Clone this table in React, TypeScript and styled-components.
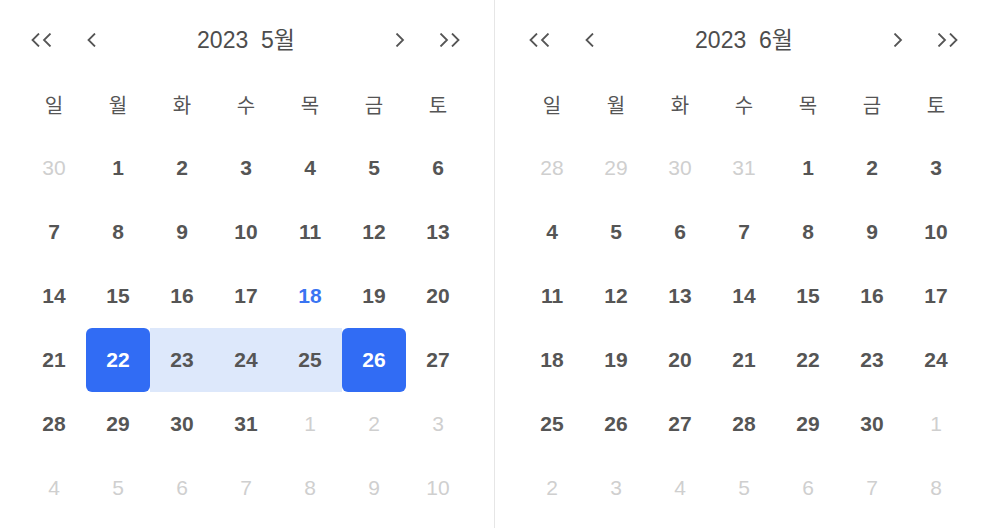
import * as React from 'react'
import styled, { createGlobalStyle } from 'styled-components'

const GlobalStyle = createGlobalStyle`
  html, body {
    margin: 0;
    padding: 0;
    background: #fff;
  }
  body {
    font-family: "Liberation Sans", "Noto Sans CJK KR", sans-serif;
    color: #555;
  }
`

const Wrapper = styled.div`
  display: flex;
  width: 984px;
  height: 528px;
  overflow: hidden;
`

const Panel = styled.section<{ $left: number; $right: number }>`
  padding: 8px ${(p) => p.$right}px 0 ${(p) => p.$left}px;
  width: 448px;
  flex: none;
`

const Divider = styled.div`
  width: 1px;
  background: #e6e6e6;
  flex: none;
`

const Header = styled.div`
  display: flex;
  align-items: center;
  height: 64px;
  gap: 10px;
`

const NavButton = styled.button`
  width: 40px;
  height: 40px;
  padding: 0;
  border: 0;
  background: none;
  display: flex;
  align-items: center;
  justify-content: center;
  color: #555;
  cursor: pointer;
`

const Title = styled.div`
  flex: 1;
  text-align: center;
  font-family: "Liberation Sans", "Noto Sans CJK KR", sans-serif;
  font-size: 23px;
  white-space: pre;
  color: #4d4d4d;
  margin-top: -4px;
`

const Grid = styled.div`
  display: grid;
  grid-template-columns: repeat(7, 64px);
  grid-auto-rows: 64px;
`

const WeekDay = styled.div`
  display: flex;
  align-items: center;
  justify-content: center;
  font-family: "Noto Sans CJK KR", sans-serif;
  font-size: 20px;
  color: #555;
`

type Kind = 'normal' | 'muted' | 'today' | 'edge' | 'range'

const Day = styled.div<{ $kind: Kind }>`
  display: flex;
  align-items: center;
  justify-content: center;
  font-size: 21px;
  font-weight: ${(p) => (p.$kind === 'muted' ? 400 : 700)};
  color: ${(p) =>
    p.$kind === 'muted' ? '#cfcfcf' : p.$kind === 'today' ? '#3a74f2' : p.$kind === 'edge' ? '#fff' : '#555'};
  background: ${(p) => (p.$kind === 'edge' ? '#316cf4' : p.$kind === 'range' ? '#dde8fb' : 'transparent')};
  border-radius: ${(p) => (p.$kind === 'edge' ? '6px' : '0')};
`

const Chevron = ({ dir, double }: { dir: 'l' | 'r'; double?: boolean }) => {
  const one = (x: number) =>
    dir === 'l' ? `M${x + 6.5} 0.5 L${x} 7 L${x + 6.5} 13.5` : `M${x} 0.5 L${x + 6.5} 7 L${x} 13.5`
  return (
    <svg width={double ? 22 : 10} height="14" viewBox={double ? '0 0 22 14' : '0 0 10 14'} fill="none">
      {double ? (
        <>
          <path d={one(1.5)} stroke="#555" strokeWidth="1.8" />
          <path d={one(13)} stroke="#555" strokeWidth="1.8" />
        </>
      ) : (
        <path d={one(1.5)} stroke="#555" strokeWidth="1.8" />
      )}
    </svg>
  )
}

const weekDays = ['일', '월', '화', '수', '목', '금', '토']

type Cell = { n: number; kind: Kind }

const buildMonth = (prevDays: number[], count: number, nextCount: number, marks: Record<number, Kind>): Cell[] => {
  const cells: Cell[] = prevDays.map((n) => ({ n, kind: 'muted' as Kind }))
  for (let i = 1; i <= count; i++) cells.push({ n: i, kind: marks[i] || 'normal' })
  for (let i = 1; i <= nextCount; i++) cells.push({ n: i, kind: 'muted' })
  return cells
}

const may = buildMonth([30], 31, 10, { 18: 'today', 22: 'edge', 23: 'range', 24: 'range', 25: 'range', 26: 'edge' })
const june = buildMonth([28, 29, 30, 31], 30, 8, {})

const Calendar = ({ title, cells, left, right }: { title: string; cells: Cell[]; left: number; right: number }) => (
  <Panel $left={left} $right={right}>
    <Header>
      <NavButton><Chevron dir="l" double /></NavButton>
      <NavButton><Chevron dir="l" /></NavButton>
      <Title>{title}</Title>
      <NavButton><Chevron dir="r" /></NavButton>
      <NavButton><Chevron dir="r" double /></NavButton>
    </Header>
    <Grid>
      {weekDays.map((d) => (
        <WeekDay key={d}>{d}</WeekDay>
      ))}
      {cells.map((c, i) => (
        <Day key={i} $kind={c.kind}>{c.n}</Day>
      ))}
    </Grid>
  </Panel>
)

export default function App () {
  return (
    <>
      <GlobalStyle />
      <Wrapper>
        <Calendar title="2023  5월" cells={may} left={22} right={24} />
        <Divider />
        <Calendar title="2023  6월" cells={june} left={25} right={16} />
      </Wrapper>
    </>
  )
}
